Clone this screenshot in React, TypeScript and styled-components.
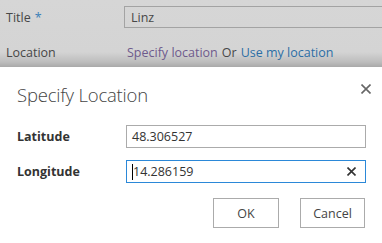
import React from "react";
import styled, { createGlobalStyle } from "styled-components";

const Global = createGlobalStyle`
  html, body { margin: 0; padding: 0; background: #ffffff; }
  body { font-family: "Open Sans", "Noto Sans", sans-serif; overflow: hidden; }
  * { box-sizing: border-box; }
`;

const Screen = styled.div`
  width: 382px;
  height: 243px;
  display: flex;
  flex-direction: column;
  overflow: hidden;
  background: #d5d5d5;
`;

const PageBehind = styled.div`
  height: 67px;
  flex: none;
  padding: 6px 0 0 6px;
  display: grid;
  grid-template-columns: 118px 1fr;
  grid-template-rows: 22px 1fr;
  row-gap: 10px;
  background: linear-gradient(to bottom, #d6d6d6 0px, #d4d4d4 52px, #bdbdbd 62px, #a9a9a9 67px);
  color: #474747;
  font-size: 12.5px;
`;

const FieldLabel = styled.div`
  display: flex;
  align-items: center;
  white-space: nowrap;
`;

const Required = styled.span`
  color: #3b7fb8;
  margin-left: 4px;
`;

const PageInput = styled.div`
  border: 1px solid #a3a3a3;
  margin-right: -10px;
  display: flex;
  align-items: center;
  padding-left: 6px;
  color: #474747;
`;

const LinkLine = styled.div`
  display: flex;
  align-items: center;
  gap: 4px;
  padding-left: 3px;
  white-space: nowrap;
`;

const Link = styled.span<{ $visited?: boolean }>`
  color: ${(p) => (p.$visited ? "#6e5a8c" : "#2c6ea5")};
`;

const Dialog = styled.div`
  flex: 1;
  background: #ffffff;
  padding: 14px 17px 0 17px;
  display: flex;
  flex-direction: column;
`;

const Header = styled.div`
  display: flex;
  justify-content: space-between;
  align-items: flex-start;
  height: 44px;
`;

const Heading = styled.h1`
  margin: 0;
  font-weight: 300;
  font-size: 18.5px;
  line-height: 28px;
  color: #444444;
  letter-spacing: -0.2px;
`;

const CloseButton = styled.button`
  border: none;
  background: none;
  padding: 0;
  margin: 2px -7px 0 0;
  width: 12px;
  height: 12px;
  display: flex;
  align-items: center;
  justify-content: center;
  color: #666666;
`;

const Form = styled.div`
  display: grid;
  grid-template-columns: 109px 240px;
  row-gap: 12px;
  align-items: center;
`;

const Label = styled.label`
  font-weight: 700;
  font-size: 12.5px;
  color: #333333;
`;

const InputBox = styled.div<{ $focused?: boolean }>`
  height: 23px;
  border: 1px solid ${(p) => (p.$focused ? "#2b88d8" : "#ababab")};
  display: flex;
  align-items: center;
  padding: 0 0 0 5px;
  font-size: 12.5px;
  color: #333333;
`;

const Caret = styled.span`
  display: inline-block;
  width: 1px;
  height: 16px;
  background: #000000;
`;

const Value = styled.span`
  flex: 1;
`;

const ClearButton = styled.span`
  width: 9px;
  height: 9px;
  margin-right: 9px;
  display: flex;
  color: #333333;
`;

const Actions = styled.div`
  display: flex;
  justify-content: flex-end;
  gap: 21px;
  margin-top: 15px;
`;

const Button = styled.button<{ $w: number }>`
  width: ${(p) => p.$w}px;
  height: 30px;
  border: 1px solid #ababab;
  background: #ffffff;
  font-family: inherit;
  font-size: 12.5px;
  color: #444444;
  padding: 0;
`;

const Cross = ({ size, stroke }: { size: number; stroke: number }) => (
  <svg width={size} height={size} viewBox={`0 0 ${size} ${size}`}>
    <path
      d={`M0.5 0.5 L${size - 0.5} ${size - 0.5} M${size - 0.5} 0.5 L0.5 ${size - 0.5}`}
      stroke="currentColor"
      strokeWidth={stroke}
    />
  </svg>
);

export default function App() {
  return (
    <>
      <Global />
      <Screen>
        <PageBehind>
          <FieldLabel>
            Title<Required>*</Required>
          </FieldLabel>
          <PageInput>Linz</PageInput>
          <FieldLabel>Location</FieldLabel>
          <LinkLine>
            <Link $visited>Specify location</Link>
            <span>Or</span>
            <Link>Use my location</Link>
          </LinkLine>
        </PageBehind>
        <Dialog>
          <Header>
            <Heading>Specify Location</Heading>
            <CloseButton aria-label="Close">
              <Cross size={10} stroke={1.6} />
            </CloseButton>
          </Header>
          <Form>
            <Label>Latitude</Label>
            <InputBox>
              <Value>48.306527</Value>
            </InputBox>
            <Label>Longitude</Label>
            <InputBox $focused>
              <Caret />
              <Value>14.286159</Value>
              <ClearButton>
                <Cross size={9} stroke={1.6} />
              </ClearButton>
            </InputBox>
          </Form>
          <Actions>
            <Button $w={66}>OK</Button>
            <Button $w={65}>Cancel</Button>
          </Actions>
        </Dialog>
      </Screen>
    </>
  );
}
